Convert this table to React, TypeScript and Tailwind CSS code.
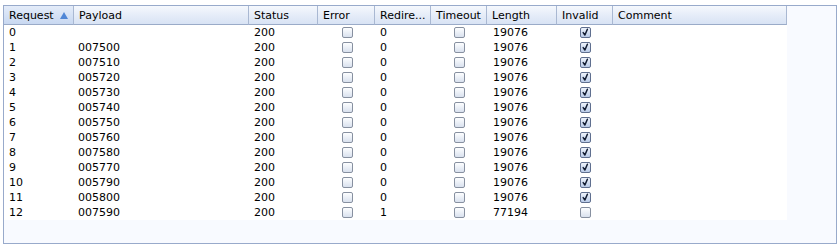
import React from "react";

type Row = { req: string; payload: string; status: string; redir: string; length: string; invalid: boolean };

const rows: Row[] = [
  { req: "0", payload: "", status: "200", redir: "0", length: "19076", invalid: true },
  { req: "1", payload: "007500", status: "200", redir: "0", length: "19076", invalid: true },
  { req: "2", payload: "007510", status: "200", redir: "0", length: "19076", invalid: true },
  { req: "3", payload: "005720", status: "200", redir: "0", length: "19076", invalid: true },
  { req: "4", payload: "005730", status: "200", redir: "0", length: "19076", invalid: true },
  { req: "5", payload: "005740", status: "200", redir: "0", length: "19076", invalid: true },
  { req: "6", payload: "005750", status: "200", redir: "0", length: "19076", invalid: true },
  { req: "7", payload: "005760", status: "200", redir: "0", length: "19076", invalid: true },
  { req: "8", payload: "007580", status: "200", redir: "0", length: "19076", invalid: true },
  { req: "9", payload: "005770", status: "200", redir: "0", length: "19076", invalid: true },
  { req: "10", payload: "005790", status: "200", redir: "0", length: "19076", invalid: true },
  { req: "11", payload: "005800", status: "200", redir: "0", length: "19076", invalid: true },
  { req: "12", payload: "007590", status: "200", redir: "1", length: "77194", invalid: false },
];

const cols = "grid grid-cols-[70px_175px_69px_57px_56px_56px_70px_56px_174px]";

function Check({ checked }: { checked: boolean }) {
  return (
    <div
      className={`w-[11px] h-[11px] rounded-[2px] border flex items-center justify-center ${
        checked
          ? "border-[#5f6f8f] bg-gradient-to-b from-[#eef3fb] to-[#b9cbe8]"
          : "border-[#8790a0] bg-gradient-to-b from-[#fdfeff] to-[#d9e1ee]"
      }`}
    >
      {checked && (
        <svg width="9" height="9" viewBox="0 0 9 9">
          <path d="M2.2 4.6 L3.9 7 L6.4 1.2" fill="none" stroke="#111b30" strokeWidth="1.5" strokeLinecap="round" strokeLinejoin="round" />
        </svg>
      )}
    </div>
  );
}

function Head({ label }: { label: React.ReactNode }) {
  return (
    <div className="h-[19px] flex items-center pl-[5px] border-b border-r border-[#a9b8d2] border-b-[#9aabc8] overflow-hidden whitespace-nowrap">
      {label}
    </div>
  );
}

export default function App() {
  return (
    <div className="w-[840px] h-[247px] bg-white pt-[5px] pl-[3px]" style={{ fontFamily: '"DejaVu Sans", "Liberation Sans", sans-serif' }}>
      <div className="w-[834px] h-[239px] border border-[#98aacb] bg-[#f8faff] text-[11px] text-black leading-none">
        <div className={`${cols} w-[783px] bg-gradient-to-b from-[#f5f8fd] via-[#e5ecf8] to-[#d7e2f4]`}>
          <div className="h-[19px] flex items-center pl-[5px] border-b border-r border-[#a9b8d2] border-b-[#9aabc8] justify-between pr-[5px] bg-gradient-to-b from-[#e4ecf9] to-[#c8d8f1]">
            <span>Request</span>
            <svg width="8" height="7" viewBox="0 0 8 7"><path d="M4 0 L8 7 L0 7 Z" fill="#4f86d6" /></svg>
          </div>
          <Head label="Payload" />
          <Head label="Status" />
          <Head label="Error" />
          <Head label="Redire..." />
          <Head label="Timeout" />
          <Head label="Length" />
          <Head label="Invalid" />
          <Head label="Comment" />
        </div>
        <div className="w-[783px] bg-white">
          {rows.map((r) => (
            <div key={r.req} className={`${cols} h-[15px] items-center`}>
              <div className="pl-[5px]">{r.req}</div>
              <div className="pl-[4px]">{r.payload}</div>
              <div className="pl-[5px]">{r.status}</div>
              <div className="pl-[24px]"><Check checked={false} /></div>
              <div className="pl-[5px]">{r.redir}</div>
              <div className="pl-[23px]"><Check checked={false} /></div>
              <div className="pl-[6px]">{r.length}</div>
              <div className="pl-[23px]"><Check checked={r.invalid} /></div>
              <div></div>
            </div>
          ))}
        </div>
      </div>
    </div>
  );
}
